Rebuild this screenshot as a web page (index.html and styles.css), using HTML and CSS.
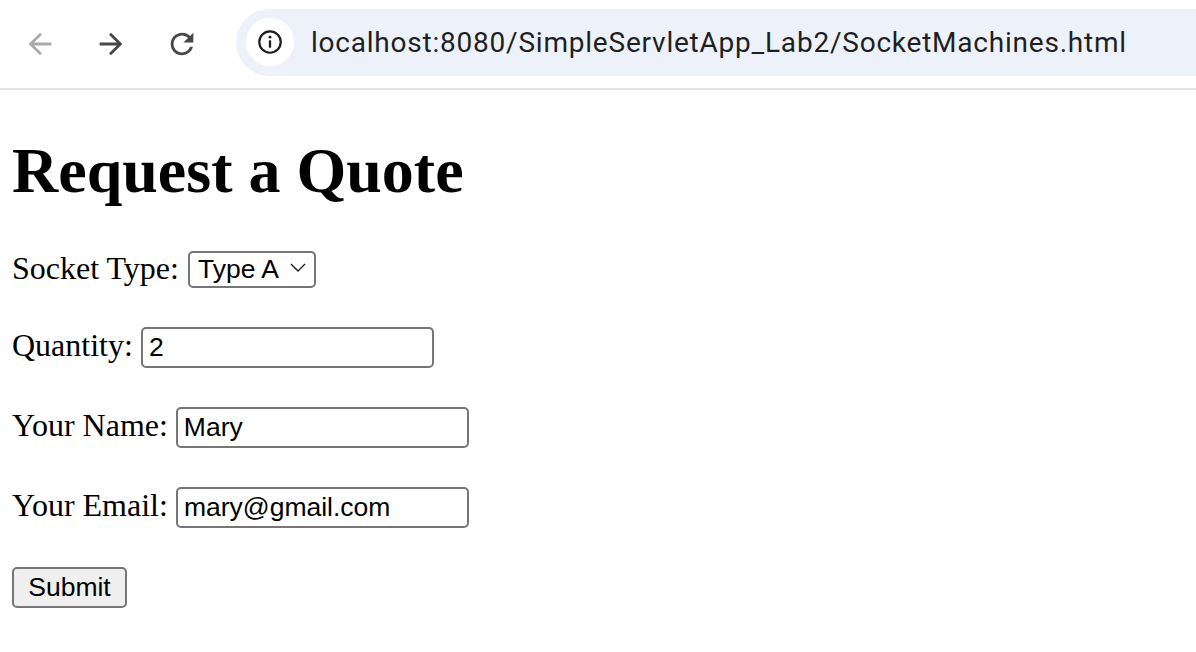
FILE: index.html
```html
<!DOCTYPE html>
<html lang="en">
<head>
<meta charset="utf-8">
<title>Request a Quote</title>
<link rel="stylesheet" href="styles.css">
</head>
<body>
<header class="toolbar">
  <div class="nav">
    <span class="nav-btn back">
      <svg viewBox="0 0 24 24" width="34" height="34"><path d="M20 11H7.83l5.59-5.59L12 4l-8 8 8 8 1.41-1.41L7.83 13H20v-2z"/></svg>
    </span>
    <span class="nav-btn fwd">
      <svg viewBox="0 0 24 24" width="34" height="34"><path d="M12 4l-1.41 1.41L16.17 11H4v2h12.17l-5.58 5.59L12 20l8-8z"/></svg>
    </span>
    <span class="nav-btn reload">
      <svg viewBox="0 0 24 24" width="34" height="34"><path d="M17.65 6.35A7.958 7.958 0 0 0 12 4c-4.42 0-7.99 3.58-7.99 8s3.57 8 7.99 8c3.730 0 6.84-2.55 7.73-6h-2.08A5.99 5.99 0 0 1 12 18c-3.31 0-6-2.69-6-6s2.69-6 6-6c1.66 0 3.14.69 4.22 1.78L13 11h7V4l-2.35 2.35z"/></svg>
    </span>
  </div>
  <div class="omnibox">
    <span class="site-info">
      <svg viewBox="0 0 24 24" width="28" height="28"><circle cx="12" cy="12" r="9.2" fill="none" stroke="#1f1f1f" stroke-width="1.9"/><rect x="11" y="10.6" width="2" height="6.4" rx="0.4" fill="#1f1f1f"/><circle cx="12" cy="7.9" r="1.2" fill="#1f1f1f"/></svg>
    </span>
    <span class="url">localhost:8080/SimpleServletApp_Lab2/SocketMachines.html</span>
  </div>
</header>
<main class="page">
  <h1 class="title">Request a Quote</h1>
  <form class="quote-form">
    <div class="row row-first">Socket Type: <span class="select-wrap"><select class="field-select"><option>Type A</option><option>Type B</option></select><svg class="chevron" viewBox="0 0 16 9" width="16" height="9"><path d="M1 1l7 7 7-7" fill="none" stroke="#1f1f1f" stroke-width="1.4"/></svg></span></div>
    <div class="row">Quantity: <input class="field" type="text" value="2"></div>
    <div class="row">Your Name: <input class="field" type="text" value="Mary"></div>
    <div class="row">Your Email: <input class="field" type="text" value="mary@gmail.com"></div>
    <div class="row"><button class="submit" type="button">Submit</button></div>
  </form>
</main>
</body>
</html>
```
FILE: styles.css
```css
html, body {
  margin: 0;
  padding: 0;
  background: #ffffff;
}
body {
  font-family: "Liberation Serif", "Times New Roman", serif;
  color: #000;
}
.toolbar {
  height: 88px;
  border-bottom: 2px solid #e3e3e3;
  display: flex;
  align-items: center;
  background: #fff;
}
.nav {
  display: flex;
  align-items: center;
  padding-left: 23px;
  gap: 37px;
  width: 213px;
}
.nav-btn {
  display: flex;
  width: 34px;
  height: 34px;
}
.nav-btn svg { display: block; }
.back svg { fill: #a9a9a9; }
.fwd svg { fill: #474747; }
.reload svg { fill: #474747; }
.omnibox {
  flex: 1;
  height: 67px;
  margin-top: -4px;
  background: #edf2fa;
  border-radius: 34px 0 0 34px;
  display: flex;
  align-items: center;
  padding-left: 10px;
}
.site-info {
  width: 48px;
  height: 48px;
  border-radius: 50%;
  background: #fff;
  display: flex;
  align-items: center;
  justify-content: center;
}
.site-info svg { display: block; }
.url {
  margin-left: 17px;
  font-family: Roboto, "Noto Sans", sans-serif;
  font-size: 28px;
  color: #1f1f1f;
  letter-spacing: 0.78px;
}
.page {
  padding: 44px 12px 0;
}
.title {
  font-family: "Liberation Serif", "Times New Roman", serif;
  font-weight: bold;
  font-size: 64px;
  line-height: 74px;
  margin: 0 0 20px;
}
.quote-form { margin: 0; }
.row {
  font-size: 32px;
  line-height: 80px;
  height: 80px;
}
.row-first {
  height: 77px;
}
.field,
.field-select,
.submit {
  font-family: "Liberation Sans", Arial, sans-serif;
  font-size: 26.5px;
  line-height: normal;
  color: #000;
  box-sizing: border-box;
  border: 2px solid #767676;
  border-radius: 5px;
  margin: 0;
  vertical-align: baseline;
}
.field {
  width: 293px;
  height: 41px;
  padding: 0 6px;
  background: #fff;
}
.select-wrap {
  position: relative;
  display: inline-block;
  line-height: normal;
  margin-left: 1px;
  vertical-align: 1px;
}
.field-select {
  appearance: none;
  -webkit-appearance: none;
  width: 128px;
  height: 37px;
  padding: 0 0 0 8px;
  background: #fff;
}
.chevron {
  position: absolute;
  right: 10px;
  top: 14px;
  pointer-events: none;
}
.submit {
  width: 115px;
  height: 41px;
  padding: 0;
  background: #efefef;
}
```
